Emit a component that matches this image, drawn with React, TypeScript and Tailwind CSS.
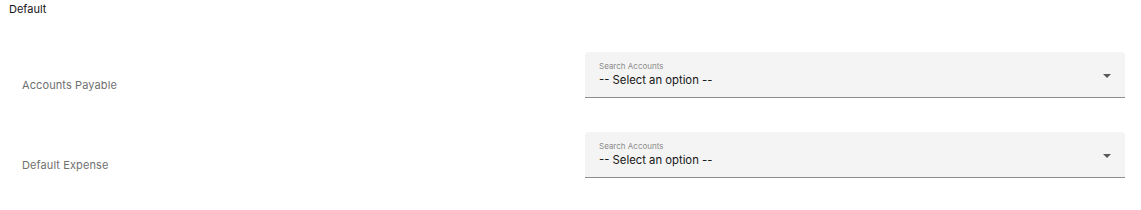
import React from "react";

const font = { fontFamily: "Inter, 'Liberation Sans', sans-serif" };

function Field() {
  return (
    <div className="relative flex h-[46px] w-[540px] flex-col rounded-t-[4px] border-b border-[#8d8d8d] bg-[#f4f4f4] pl-[14px] pt-[8px]">
      <span className="text-[8px] leading-[12px] text-[#8d8d8d]">Search Accounts</span>
      <span className="text-[11.3px] leading-[17px] text-[#161616]">-- Select an option --</span>
      <svg className="absolute right-[14px] top-[22px]" width="8" height="4" viewBox="0 0 8 4">
        <path d="M0 0 L8 0 L4 4 Z" fill="#5a5a5a" />
      </svg>
    </div>
  );
}

function Row({ label }: { label: string }) {
  return (
    <div className="flex h-[80px] items-start">
      <div className="w-[585px] pl-[22px] pt-[25px] text-[11px] tracking-[0.1px] leading-[16px] text-[#707070]">{label}</div>
      <Field />
    </div>
  );
}

export default function App() {
  return (
    <div className="h-[210px] w-[1141px] bg-white" style={font}>
      <div className="pl-[9px] pt-[1px] text-[11px] leading-[16px] text-[#161616]">Default</div>
      <div className="pt-[35px]">
        <Row label="Accounts Payable" />
        <Row label="Default Expense" />
      </div>
    </div>
  );
}
